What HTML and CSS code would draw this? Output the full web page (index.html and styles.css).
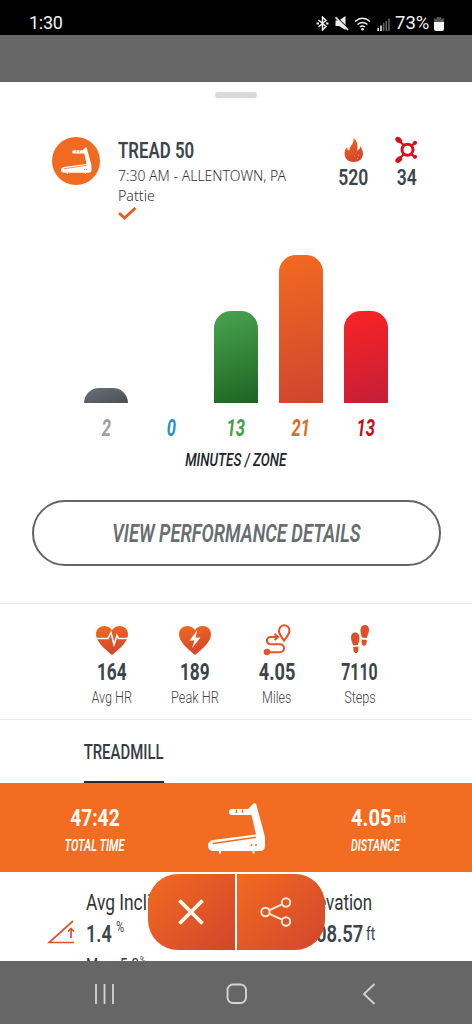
FILE: index.html
```html
<!DOCTYPE html>
<html lang="en">
<head>
<meta charset="utf-8">
<meta name="viewport" content="width=device-width, initial-scale=1">
<title>Workout summary</title>
<link rel="stylesheet" href="styles.css">
</head>
<body>
<svg class="defs" width="0" height="0" aria-hidden="true">
  <defs>
    <linearGradient id="warm" x1="0" y1="0" x2="0.3" y2="1"><stop offset="0" stop-color="#f26a21"/><stop offset="1" stop-color="#d3472b"/></linearGradient>
    <symbol id="treadmill" viewBox="0 0 58 52">
      <path fill="#fff" d="M24 6H40L45.500.600Q47.500-.600 48.300 1.500L56.500 32Q57 34 57 36V43Q57 48 52 48H6Q0 48 0 42.500 0 38 5 37L48 31.500 43.500 12H24Q21 12 21 9T24 6Z"/>
      <path class="cut" d="M5 40.500 48 34.300M28.500 6.500V10M34.500 6.500V10" fill="none" stroke-width="1.400"/>
      <path fill="#fff" d="M11 48h2v2.500h-2zM44.500 48h2v2.500h-2z"/>
      <circle class="dot" cx="43.500" cy="42" r="1"/><circle class="dot" cx="48" cy="42" r="1"/>
    </symbol>
  </defs>
</svg>
<div class="phone">
  <header class="status">
    <span class="clock">1:30</span>
    <div class="status-icons">
      <svg width="13" height="15" viewBox="0 0 13 15"><path d="M2.500 4 10 10.500 6.500 14V1L10 4.500 2.500 11" fill="none" stroke="#eee" stroke-width="1.500"/><path d="M.5 7.500H3M10 7.500h2.500" stroke="#eee" stroke-width="1.800"/></svg>
      <svg width="14" height="15" viewBox="0 0 14 15"><path d="M.5 4.500H4L10.500 0V14L4 10H.5Z" fill="#eee"/><path d="M1 1 14 14" stroke="#000" stroke-width="2"/><path d="M.5 1.300 13 13.800" stroke="#eee" stroke-width="1.700"/></svg>
      <svg width="17" height="14" viewBox="0 0 17 14"><path d="M1 4.500q7.500-6.500 15 0M3.500 7.500q5-4 10 0M6 10q2.500-2 5 0" fill="none" stroke="#eee" stroke-width="1.500"/><circle cx="8.500" cy="12.300" r="1.300" fill="#eee"/></svg>
      <svg width="13" height="14" viewBox="0 0 13 14"><path d="M1.200 11v3M4 8.500V14" stroke="#eee" stroke-width="1.600"/><path d="M6.700 6v8M9.300 4v10M12 1.500V14" stroke="#666" stroke-width="1.500"/></svg>
      <span class="charge">73%</span>
      <svg width="10" height="14" viewBox="0 0 10 14"><path d="M3 0h4v1.500h3V6H0V1.500h3Z" fill="#555"/><path d="M0 5h10v7q0 2-2 2H2q-2 0-2-2Z" fill="#f4f4f4"/></svg>
    </div>
  </header>
  <div class="scrim"></div>
  <main class="sheet">
    <div class="handle"></div>
    <section class="workout">
      <div class="badge"><svg width="31" height="28"><use href="#treadmill"/></svg></div>
      <div class="who">
        <h1 class="t title">TREAD 50</h1>
        <span class="t meta place">7:30 AM - ALLENTOWN, PA</span>
        <span class="t meta coach">Pattie</span>
        <svg class="check" width="20" height="14" viewBox="0 0 20 14"><path d="M1 6 6.500 11 17.500 1" fill="none" stroke="#dc6428" stroke-width="3"/></svg>
      </div>
      <div class="totals">
        <div class="total">
          <svg width="20" height="26" viewBox="0 0 20 26"><path fill="url(#warm)" d="M9 1C11.500 5 5.500 8.500 5.200 13.500 3.500 13 3.200 11.500 3.200 10 1.200 12 .5 14.500.5 16.500.5 21.500 4.500 25 9.800 25s9.200-3.500 9.200-8.500c0-3.500-1.600-5.500-2.600-7.500-.2 2.500-1.400 4-3.400 4.500C14.500 8 13 3 9 1Z"/><path d="M13 21l.8.800M14 18l1 .500M10 19h.6" stroke="#ffc9a0" stroke-width=".8"/></svg>
          <b class="t count">520</b>
        </div>
        <div class="total">
          <svg width="24" height="28" viewBox="0 0 24 28"><g stroke="#d5101c" fill="none"><circle cx="12.500" cy="13.800" r="5.500" stroke-width="3"/><path d="M9 9.500 4 4.500M9 18 4 23M16 10l4-3M16 18l4 3" stroke-width="2.200"/></g><g fill="#d5101c"><ellipse cx="3.700" cy="4" rx="3.700" ry="2.700" transform="rotate(40 3.700 4)"/><ellipse cx="3.700" cy="23.700" rx="3.700" ry="2.700" transform="rotate(-40 3.700 23.700)"/><circle cx="20" cy="6.800" r="2.100"/><circle cx="20" cy="20.800" r="2.100"/></g></svg>
          <b class="t count">34</b>
        </div>
      </div>
    </section>
    <section class="zones">
      <div class="chart">
        <div class="bar gray"></div><div class="bar blue"></div><div class="bar green"></div><div class="bar orange"></div><div class="bar red"></div>
      </div>
      <div class="minutes">
        <span><b class="t m-gray">2</b></span><span><b class="t m-blue">0</b></span><span><b class="t m-green">13</b></span><span><b class="t m-orange">21</b></span><span><b class="t m-red">13</b></span>
      </div>
      <div class="axis"><span class="t">MINUTES / ZONE</span></div>
    </section>
    <button class="details"><span class="t">VIEW PERFORMANCE DETAILS</span></button>
    <section class="stats">
      <div class="stat">
        <svg width="34" height="32" viewBox="0 0 34 32"><path fill="url(#warm)" d="M17 31C9 24 1 18 1 10 1 2 12-1 17 6 22-1 33 2 33 10c0 8-8 14-16 21Z"/><path d="M1 14.500h12l3-6 3 12 3-9 1.500 3H33" fill="none" stroke="#fff" stroke-width="1.600"/></svg>
        <b class="t value n164">164</b><span class="t label avg">Avg HR</span>
      </div>
      <div class="stat">
        <svg width="34" height="32" viewBox="0 0 34 32"><path fill="url(#warm)" d="M17 31C9 24 1 18 1 10 1 2 12-1 17 6 22-1 33 2 33 10c0 8-8 14-16 21Z"/><path d="M19.500 6 11.500 16.500h5L14 24l8.500-10.500h-5Z" fill="#fff"/></svg>
        <b class="t value n189">189</b><span class="t label peak">Peak HR</span>
      </div>
      <div class="stat">
        <svg width="30" height="32" viewBox="0 0 30 32"><g fill="none" stroke="#e35426" stroke-width="2.100"><path d="M22 16.500C19 12 17 10 17 7a5 5.500 0 0 1 10.500 0c0 3-2.500 5-5.500 9.500Z"/><path d="M16 13H8.500a3.600 3.600 0 0 0 0 7.200H18a4 4 0 0 1 0 8H8M12.500 10l3.500 3-3.500 3"/></g><circle cx="5" cy="28" r="3.300" fill="#e35426"/></svg>
        <b class="t value n405">4.05</b><span class="t label miles">Miles</span>
      </div>
      <div class="stat">
        <svg width="20" height="32" viewBox="0 0 20 32"><g fill="#df4f27"><path d="M4.500 8.500C8 8 9.500 11 9.500 14c0 3-1 4-1.500 7l-5 .5C2.500 18 1 17 1 13.500c0-2.500 1-4.700 3.500-5ZM3.300 23l5-.4c.5 3 .2 6-2 6.400-2.500.3-3-2-3-6Z"/><path d="M15.500 1c-3.500-.3-4.800 2.500-5 5-.2 3 1 4.500 1.300 7.500l5 .5c.5-3 2-4 2.200-8 .1-2.500-1-4.800-3.500-5ZM16.700 16l-5-.5c-.3 3 0 6 2.200 6.200 2.400.1 2.800-2.500 2.800-5.700Z"/></g></svg>
        <b class="t value n7110">7110</b><span class="t label steps">Steps</span>
      </div>
    </section>
    <nav class="tabs"><div class="tab"><span class="t">TREADMILL</span></div></nav>
    <section class="banner">
      <div class="figure"><b class="t big time">47:42</b><i class="t sub total-time">TOTAL TIME</i></div>
      <svg class="machine" width="58" height="52"><use href="#treadmill"/></svg>
      <div class="figure dist">
        <div class="pair"><b class="t big miles-run">4.05</b><span class="t unit-mi">mi</span></div>
        <i class="t sub distance">DISTANCE</i>
      </div>
    </section>
    <section class="more">
      <svg class="incline" width="28" height="26" viewBox="0 0 28 26"><path d="M26 1 2 22.500h25M24 18V8.500M21 11.500 24 8.500l3 3" fill="none" stroke="#d9532c" stroke-width="1.700"/></svg>
      <div class="entry">
        <span class="t name avg-inc">Avg Incline</span>
        <div class="pair"><b class="t num n14">1.4</b><span class="t pct">%</span></div>
        <div class="pair max"><span class="t">Max. 5.0</span><span class="t pct">%</span></div>
      </div>
      <div class="entry end">
        <span class="t name elev">Elevation</span>
        <div class="pair"><b class="t num n208">208.57</b><span class="t ft">ft</span></div>
      </div>
      <div class="actions">
        <button aria-label="Close"><svg width="28" height="28" viewBox="0 0 28 28"><path d="M2.500 2.500l23 23M25.500 2.500l-23 23" stroke="#fffaf0" stroke-width="3.800"/></svg></button>
        <button aria-label="Share"><svg width="34" height="32" viewBox="0 0 34 32"><g fill="none" stroke="#ffeedd" stroke-width="2"><circle cx="6.500" cy="16" r="4.200"/><circle cx="27" cy="6.500" r="4.200"/><circle cx="27" cy="25.500" r="4.200"/><path d="M10.500 14.200 23 8.300M10.500 17.800 23 23.700"/></g></svg></button>
      </div>
    </section>
  </main>
  <footer class="system">
    <svg width="22" height="22" viewBox="0 0 22 22"><path d="M2 1v20M10.500 1v20M19 1v20" stroke="#d4d4d4" stroke-width="1.800"/></svg>
    <svg width="22" height="22" viewBox="0 0 22 22"><rect x="1.500" y="1.500" width="18.500" height="18.500" rx="5.500" fill="none" stroke="#d4d4d4" stroke-width="1.900"/></svg>
    <svg class="back" width="14" height="22" viewBox="0 0 14 22"><path d="M12.500 1 2 11l10.500 10" fill="none" stroke="#d4d4d4" stroke-width="1.800"/></svg>
  </footer>
</div>
</body>
</html>
```
FILE: styles.css
```css
* { box-sizing: border-box; }
body { margin: 0; font-family: Roboto, "Liberation Sans", sans-serif; color: #3c444b; }
.defs { position: absolute; }
svg { display: block; flex: none; }
h1, b { margin: 0; font-weight: 500; }
button { border: 0; margin: 0; padding: 0; background: none; font: inherit; display: flex; align-items: center; justify-content: center; }
.phone { width: 472px; height: 1024px; display: flex; flex-direction: column; overflow: hidden; }
/* condensed lettering */
.t { display: block; flex: none; white-space: nowrap; transform: scaleX(var(--sx, .77)); }

.status { height: 35px; flex: none; background: #000; color: #f2f2f2; display: flex; justify-content: space-between; padding: 12px 28.500px 0 29px; line-height: 22px; }
.clock { font-size: 18px; letter-spacing: -.3px; }
.status-icons { display: flex; align-items: center; gap: 5.500px; height: 22px; }
.status-icons svg { margin-top: 1px; }
.charge { font-size: 18.500px; margin-right: -4px; width: 37px; }
.scrim { height: 47px; flex: none; background: #666; }
.sheet { flex: 1; min-height: 0; background: #fff; overflow: hidden; display: flex; flex-direction: column; }
.handle { width: 42px; height: 6px; border-radius: 3px; background: #d9d9d9; margin: 10px auto 0; flex: none; }

.workout { display: flex; height: 156px; flex: none; padding: 38px 0 0 52px; }
.badge { width: 48px; height: 48px; border-radius: 50%; background: #f06a22; display: flex; align-items: center; justify-content: center; margin-top: 1px; }
.cut { stroke: #f06a22; }
.dot { fill: #f06a22; }
.who { width: 213px; padding: 2px 0 0 18px; }
.who .t { transform-origin: left; }
.title { font-size: 22px; line-height: 26px; font-weight: 600; --sx: .765; }
.meta { font-family: "Noto Sans", sans-serif; font-weight: 300; font-size: 14.500px; line-height: 20px; color: #333; }
.place { --sx: .967; margin-top: 1px; }
.coach { --sx: .98; }
.check { margin-top: 2px; }
.totals { display: flex; margin-left: 14px; }
.total { width: 53px; display: flex; flex-direction: column; align-items: center; }
.total svg { height: 28px; }
.count { font-size: 22.500px; line-height: 26px; font-weight: 600; --sx: .78; }

.zones { height: 246px; flex: none; }
.chart { height: 148.500px; display: flex; align-items: flex-end; gap: 21px; padding-left: 84px; }
.bar { width: 44px; border-radius: 17px 17px 0 0; }
.gray { height: 15px; background: linear-gradient(160deg, #6b7278, #494e53); border-radius: 16px 16px 0 0; }
.green { height: 92px; background: linear-gradient(160deg, #4aa450, #1d6420); }
.orange { height: 148px; background: linear-gradient(165deg, #f26a21, #cf452f); }
.red { height: 92px; background: linear-gradient(160deg, #fb2424, #c41e3a); }
.minutes { display: flex; padding: 12.500px 0 0 73.500px; font-size: 23px; line-height: 28px; font-style: italic; }
.minutes span { width: 65px; display: flex; justify-content: center; }
.minutes .t { font-weight: 700; --sx: .72; }
.m-gray { color: #a0a0a0; }
.m-blue { color: #2593c8; }
.m-green { color: #43a047; }
.m-orange { color: #e06c22; }
.m-red { color: #c90d18; }
.axis { display: flex; justify-content: center; padding-top: 5px; font-size: 17.500px; line-height: 24px; font-style: italic; font-weight: 500; color: #202428; }
.axis .t { --sx: .77; }
.details { width: 409px; height: 66px; flex: none; margin-left: 31.500px; border: 2px solid #626466; border-radius: 33px; color: #686d70; font-size: 25px; font-style: italic; font-weight: 600; }
.details .t { --sx: .733; }

.stats { margin-top: 37px; height: 117px; flex: none; border-top: 1px solid #eaeaea; border-bottom: 1px solid #eaeaea; display: flex; padding: 20px 0 0 70.750px; }
.stat { width: 82.500px; display: flex; flex-direction: column; align-items: center; }
.value { font-weight: 700; font-size: 23px; line-height: 26px; margin-top: 4px; --sx: .75; }
.n405 { --sx: .79; }
.n7110 { --sx: .69; }
.label { font-size: 16px; line-height: 24px; color: #444; font-weight: 300; --sx: .79; }
.peak { --sx: .8; }
.miles { --sx: .78; }
.tabs { height: 63px; flex: none; padding-left: 84px; }
.tab { width: 80px; height: 63px; border-bottom: 2px solid #262a33; padding-top: 20px; display: flex; justify-content: center; font-size: 20px; line-height: 24px; font-weight: 500; color: #343b42; }
.tab .t { --sx: .745; }
.banner { height: 89px; flex: none; background: #f26c22; color: #fff; display: flex; padding-top: 19px; }
.figure { width: 189px; display: flex; flex-direction: column; align-items: center; }
.big { font-weight: 700; font-size: 24px; line-height: 32px; --sx: .8; }
.sub { font-size: 16px; line-height: 22px; margin-top: 1px; font-weight: 600; --sx: .69; }
.machine { margin: 1px 0 0 19px; }
.pair { display: flex; }
.pair .t { transform-origin: left; }
.dist { width: auto; align-items: flex-start; margin-left: 84.500px; }
.dist .t { transform-origin: left; }
.dist .big { width: 43px; --sx: .84; }
.dist .distance { --sx: .67; }
.unit-mi { font-size: 14px; line-height: 32px; font-weight: 500; --sx: .75; }

.more { position: relative; height: 89px; flex: none; display: flex; padding-top: 18px; overflow: hidden; }
.incline { margin: 30px 0 0 47px; }
.entry { width: 160px; margin-left: 11px; }
.name { font-size: 22px; line-height: 26px; transform-origin: left; --sx: .79; color: #333; font-weight: 400; }
.entry .pair { height: 37px; line-height: 36px; }
.num { font-weight: 600; font-size: 24px; --sx: .75; }
.n14 { width: 30px; }
.pct { font-size: 14px; line-height: 22px; --sx: .8; }
.entry .max { height: 22px; line-height: 22px; font-size: 17px; color: #333; }
.max .t:first-child { width: 54px; --sx: .82; }
.max .pct { font-size: 9px; line-height: 14px; }
.end { width: 118px; display: flex; flex-direction: column; align-items: flex-end; }
.end .name { transform-origin: right; margin-right: 3px; --sx: .77; }
.end .num { transform-origin: right; --sx: .77; }
.ft { font-size: 18px; width: 9px; margin-left: 3px; }
.actions { position: absolute; left: 147.500px; top: 2px; width: 177px; height: 76px; display: grid; grid-template-columns: 1fr 1fr; gap: 2px; border-radius: 30px; overflow: hidden; }
.actions button { background: linear-gradient(135deg, #f26a21, #d2462c); }
.actions button:last-child { padding-right: 9px; }
.system { height: 63px; flex: none; background: #666; display: flex; align-items: center; padding: 3px 0 0 93.500px; gap: 110px; }
.back { margin-left: 4px; }
```
